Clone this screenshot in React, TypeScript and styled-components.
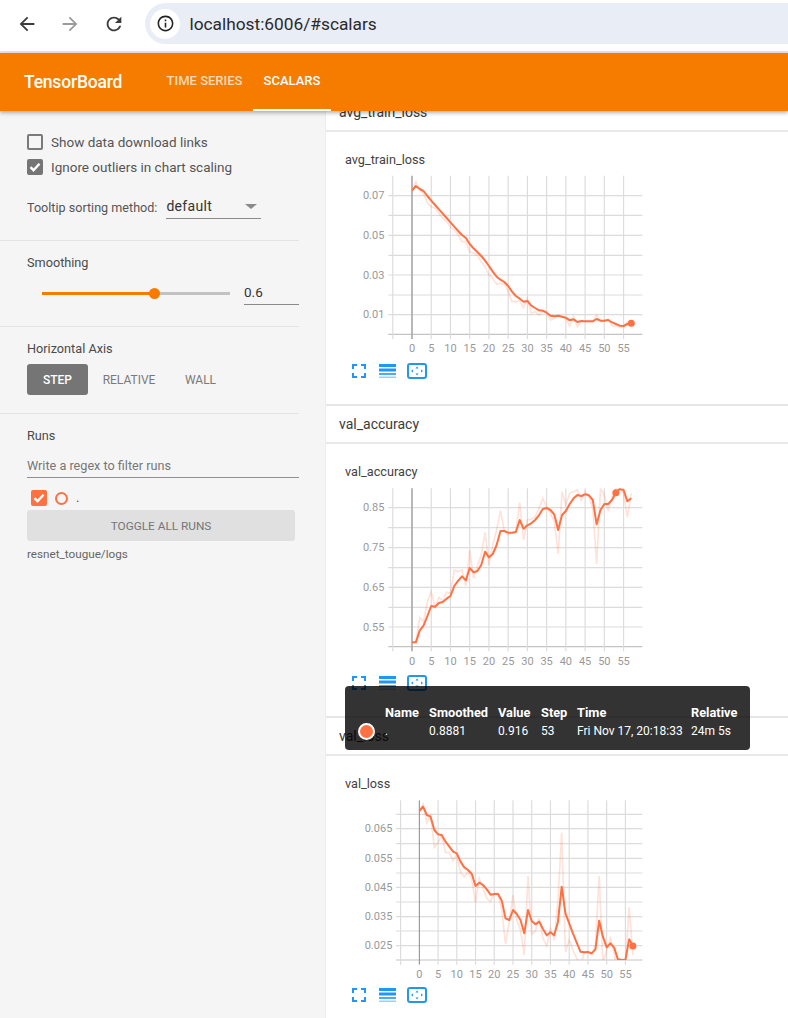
import { FC } from 'react'
import styled, { createGlobalStyle } from 'styled-components'

const GlobalStyle = createGlobalStyle`
	html, body {
		margin: 0;
		padding: 0;
		background: #fff;
		font-family: Roboto, "Liberation Sans", sans-serif;
		color: #424242;
	}
	* {
		box-sizing: border-box;
	}
`

const Page = styled.div`
	position: relative;
	width: 788px;
	height: 1018px;
	overflow: hidden;
	display: flex;
	flex-direction: column;
`

const BrowserBar = styled.div`
	height: 53px;
	flex: none;
	display: flex;
	align-items: flex-start;
	padding: 3px 0 0 16px;
	background: #fff;
	border-bottom: 2px solid #e4e4e4;
`

const NavIcon = styled.svg<{ $muted?: boolean; $gap: number }>`
	width: 22px;
	height: 22px;
	flex: none;
	margin: 10px ${p => p.$gap}px 0 0;
	fill: ${p => (p.$muted ? '#9a9a9a' : '#3c3c3c')};
`

const UrlPill = styled.div`
	flex: 1;
	height: 41px;
	display: flex;
	align-items: center;
	gap: 9.5px;
	padding-left: 5px;
	border-radius: 21px 0 0 21px;
	background: #e9edf6;
	font-size: 17.3px;
	color: #2a2a2a;
`

const InfoBadge = styled.div`
	width: 30px;
	height: 30px;
	border-radius: 50%;
	background: #fff;
	display: flex;
	align-items: center;
	justify-content: center;

	svg {
		width: 19px;
		height: 19px;
		fill: #222;
	}
`

const Header = styled.div`
	position: relative;
	z-index: 2;
	height: 58px;
	flex: none;
	display: flex;
	align-items: stretch;
	padding-left: 24px;
	background: #f67c00;
	box-shadow: 0 2px 4px rgba(0, 0, 0, 0.3);
	color: #fff;
`

const Brand = styled.div`
	width: 132px;
	font-size: 17.5px;
	font-weight: 500;
	letter-spacing: -0.2px;
	line-height: 58px;
`

const Tab = styled.div<{ $active?: boolean; $width: number }>`
	width: ${p => p.$width}px;
	text-align: center;
	line-height: 56px;
	font-size: 13px;
	font-weight: 500;
	white-space: nowrap;
	color: ${p => (p.$active ? '#fff' : 'rgba(255, 255, 255, 0.72)')};
	border-bottom: 2px solid ${p => (p.$active ? '#fff' : 'transparent')};
`

const Main = styled.div`
	flex: 1;
	display: flex;
	min-height: 0;
`

const Sidebar = styled.div`
	width: 326px;
	flex: none;
	background: #f5f5f5;
	border-right: 1px solid #ececec;
	color: #555;
`

const Group = styled.div<{ $top: number; $bottom: number; $last?: boolean }>`
	margin: 0 26px 0 27px;
	padding: ${p => p.$top}px 0 ${p => p.$bottom}px;
	position: relative;

	${p => !p.$last && `
		&::after {
			content: '';
			position: absolute;
			left: -27px;
			right: 0;
			bottom: 0;
			height: 1px;
			background: #e3e3e3;
		}
	`}
`

const CheckRow = styled.div`
	height: 25px;
	display: flex;
	align-items: center;
	gap: 8px;
	font-size: 13.5px;
`

const Box = styled.div<{ $color?: string }>`
	width: 16px;
	height: 16px;
	flex: none;
	border-radius: 2px;
	border: 2px solid ${p => p.$color ?? '#7a7a7a'};
	background: ${p => p.$color ?? 'transparent'};
	display: flex;
	align-items: center;
	justify-content: center;

	svg {
		width: 12px;
		height: 12px;
		fill: none;
		stroke: #fff;
		stroke-width: 2.4;
	}
`

const SortRow = styled.div`
	height: 24px;
	margin-top: 16px;
	display: flex;
	align-items: center;
	gap: 9px;
	font-size: 12.6px;
	white-space: nowrap;
`

const Select = styled.div`
	width: 95px;
	height: 24px;
	display: flex;
	align-items: center;
	justify-content: space-between;
	padding: 0 4px 1px 0;
	border-bottom: 1px solid #8a8a8a;
	font-size: 14px;
	letter-spacing: 0.3px;
	color: #333;

	&::after {
		content: '';
		border-left: 6px solid transparent;
		border-right: 6px solid transparent;
		border-top: 5px solid #8a8a8a;
	}
`

const Label = styled.div`
	height: 18px;
	line-height: 18px;
	font-size: 12.7px;
	color: #4a4a4a;
`

const SliderRow = styled.div`
	height: 24px;
	margin-top: 9px;
	padding-left: 15px;
	display: flex;
	align-items: center;
	gap: 14px;
`

const Track = styled.div<{ $percent: number }>`
	position: relative;
	width: 188px;
	height: 3px;
	background: linear-gradient(
		to right,
		#f57c00 ${p => p.$percent}%,
		#c2c2c2 ${p => p.$percent}%
	);

	&::after {
		content: '';
		position: absolute;
		left: ${p => p.$percent}%;
		top: 50%;
		width: 11px;
		height: 11px;
		margin: -5.5px 0 0 -5.5px;
		border-radius: 50%;
		background: #f57c00;
	}
`

const ValueField = styled.div`
	flex: 1;
	height: 24px;
	line-height: 22px;
	border-bottom: 1px solid #8a8a8a;
	font-size: 13.5px;
	color: #333;
`

const AxisButtons = styled.div`
	height: 31px;
	margin-top: 6px;
	display: flex;
	align-items: stretch;
	font-size: 12px;
`

const AxisButton = styled.div<{ $active?: boolean; $width: number }>`
	width: ${p => p.$width}px;
	display: flex;
	align-items: center;
	justify-content: center;
	border-radius: 3px;
	font-weight: ${p => (p.$active ? 500 : 400)};
	background: ${p => (p.$active ? '#757575' : 'transparent')};
	color: ${p => (p.$active ? '#fff' : '#7a7a7a')};
`

const Filter = styled.div`
	height: 24px;
	margin-top: 9px;
	line-height: 23px;
	border-bottom: 1px solid #8f8f8f;
	font-size: 12.65px;
	color: #777;
`

const RunRow = styled.div`
	height: 16px;
	margin: 12px 0 0 4px;
	display: flex;
	align-items: center;
	gap: 8px;
	font-size: 13px;
	line-height: 16px;
`

const RunDot = styled.div`
	width: 13px;
	height: 13px;
	border-radius: 50%;
	border: 2px solid #ff7043;
`

const ToggleButton = styled.div`
	width: 268px;
	height: 31px;
	margin-top: 4px;
	display: flex;
	align-items: center;
	justify-content: center;
	border-radius: 3px;
	background: #e0e0e0;
	font-size: 11.8px;
	color: #757575;
`

const RepoName = styled.div`
	margin-top: 5px;
	line-height: 16px;
	font-size: 11.7px;
	color: #666;
`

const Content = styled.div`
	flex: 1;
	min-width: 0;
	margin-top: -19px;
`

const SectionHead = styled.div`
	height: 40px;
	padding-left: 13px;
	line-height: 36px;
	font-size: 14px;
	color: #3a3a3a;
	border-top: 2px solid #e6e6e6;
	border-bottom: 2px solid #e9e9e9;
`

const Card = styled.div`
	height: 272px;
	padding-left: 14px;
`

const CardTitle = styled.div`
	height: 38px;
	padding: 20px 0 0 5px;
	line-height: 16px;
	font-size: 12.7px;
	color: #424242;
`

const ChartSvg = styled.svg`
	display: block;
	width: 310px;
	height: 190px;
	font-family: Roboto, "Liberation Sans", sans-serif;
`

const ChartTools = styled.div`
	height: 16px;
	margin: 3px 0 0 12px;
	display: flex;
	align-items: center;
	color: #2196f3;

	svg {
		display: block;
		flex: none;
	}
`

const Tooltip = styled.div`
	position: absolute;
	z-index: 3;
	left: 345px;
	top: 686px;
	width: 405px;
	height: 64px;
	padding: 18px 0 0 40px;
	border-radius: 4px;
	background: rgba(0, 0, 0, 0.8);
	color: #fff;
	font-size: 12px;
	display: grid;
	grid-template-columns: 44px 69px 43px 36px 114px auto;
	grid-template-rows: 17px 20px;
	align-items: center;
	white-space: nowrap;
`

const TipHead = styled.div`
	font-weight: 700;
	font-size: 12.8px;
`

const TipDot = styled.div`
	position: absolute;
	left: 13px;
	top: 37px;
	width: 17px;
	height: 17px;
	border-radius: 50%;
	background: #ff7043;
	border: 2px solid #fff;
`

type ChartSpec = {
	viewY: number
	x0: number
	left: number
	hLeft: number
	top: number
	bottom: number
	lines: number[]
	labels: [number, string][]
	labelEnd: number
	axisWidth: number
	axisColor: string
	smoothed: number[]
	raw: number[]
	marker: number
	stepSize: number
}

const RIGHT = 907

const lossChart: ChartSpec = {
	viewY: 0,
	x0: 216,
	left: 158,
	hLeft: 145,
	top: 17,
	bottom: 493,
	lines: [77, 136, 196, 256, 315, 375, 434],
	labels: [[77, '0.07'], [196, '0.05'], [315, '0.03'], [434, '0.01']],
	labelEnd: 133,
	axisWidth: 5,
	axisColor: '#aaa',
	stepSize: 11.54,
	marker: 57,
	smoothed: [62, 48, 57, 63, 78, 92, 105, 118, 131, 144, 157, 170, 183, 195, 204, 222, 235, 246, 258, 272, 288, 305, 320, 329, 336, 348, 365, 378, 386, 395, 393, 407, 414, 421, 422, 428, 437, 439, 437, 440, 443, 451, 448, 456, 453, 454, 454, 454, 447, 452, 452, 450, 457, 462, 467, 468, 462, 460],
	raw: [60, 35, 60, 70, 100, 110, 115, 130, 145, 155, 170, 180, 195, 215, 215, 245, 250, 255, 275, 290, 315, 325, 343, 340, 342, 365, 395, 395, 393, 412, 385, 430, 425, 435, 425, 430, 450, 445, 435, 440, 445, 468, 440, 470, 452, 455, 455, 455, 435, 455, 452, 448, 468, 468, 472, 470, 455, 458],
}

const accuracyChart: ChartSpec = {
	viewY: 6,
	x0: 216,
	left: 158,
	hLeft: 145,
	top: 25,
	bottom: 500,
	lines: [83, 143, 203, 263, 322, 382, 441],
	labels: [[83, '0.85'], [203, '0.75'], [322, '0.65'], [441, '0.55']],
	labelEnd: 133,
	axisWidth: 5,
	axisColor: '#aaa',
	stepSize: 11.54,
	marker: 53,
	smoothed: [487, 487, 452, 437, 408, 378, 380, 369, 366, 356, 348, 318, 302, 289, 301, 264, 277, 273, 255, 215, 232, 222, 195, 153, 153, 158, 158, 156, 120, 146, 136, 130, 120, 106, 87, 84, 90, 104, 150, 105, 93, 72, 55, 45, 48, 43, 46, 60, 133, 90, 72, 72, 60, 38, 27, 30, 64, 55],
	raw: [487, 487, 413, 425, 365, 335, 382, 352, 362, 337, 340, 270, 275, 270, 318, 210, 295, 258, 225, 157, 255, 195, 150, 92, 153, 165, 158, 155, 68, 180, 120, 118, 110, 85, 55, 80, 100, 125, 222, 35, 75, 40, 35, 30, 60, 35, 50, 85, 252, 25, 45, 90, 50, 25, 25, 40, 112, 40],
}

const valLossChart: ChartSpec = {
	viewY: 12,
	x0: 238,
	left: 182,
	hLeft: 168,
	top: 31,
	bottom: 510,
	lines: [73, 116, 161, 205, 249, 292, 336, 380, 423, 467],
	labels: [[116, '0.065'], [205, '0.055'], [292, '0.045'], [380, '0.035'], [467, '0.025']],
	labelEnd: 157,
	axisWidth: 3,
	axisColor: '#888',
	stepSize: 11.24,
	marker: 57,
	smoothed: [63, 50, 75, 80, 120, 133, 136, 155, 170, 185, 190, 215, 232, 240, 252, 288, 278, 285, 298, 314, 312, 312, 332, 385, 390, 360, 372, 390, 430, 360, 393, 403, 395, 417, 436, 427, 436, 395, 290, 370, 400, 430, 458, 485, 487, 486, 490, 478, 392, 440, 472, 460, 473, 508, 510, 510, 448, 468],
	raw: [60, 42, 98, 75, 172, 158, 135, 188, 188, 212, 195, 248, 260, 245, 270, 338, 265, 295, 325, 335, 310, 310, 360, 462, 395, 315, 390, 420, 495, 258, 432, 422, 385, 445, 468, 415, 450, 330, 128, 485, 450, 480, 505, 530, 488, 485, 495, 465, 258, 520, 480, 445, 490, 560, 515, 520, 352, 495],
}

const XTICKS = [0, 5, 10, 15, 20, 25, 30, 35, 40, 45, 50, 55]
const ORANGE = '#ff7043'
const GRID = '#dcdcdc'

const Chart: FC<{ spec: ChartSpec; id: string }> = ({ spec, id }) => {
	const xOf = (step: number) => spec.x0 + step * spec.stepSize
	const toPoints = (values: number[]) => values.map((y, i) => `${xOf(i).toFixed(1)},${y}`).join(' ')
	const markerY = spec.smoothed[spec.marker]

	return (
		<ChartSvg viewBox={`0 ${spec.viewY} 930 570`}>
			<defs>
				<clipPath id={id}>
					<rect x={spec.left} y={spec.top} width={RIGHT - spec.left} height={spec.bottom - spec.top} />
				</clipPath>
			</defs>
			{spec.lines.map(y => (
				<line key={y} x1={spec.hLeft} x2={RIGHT} y1={y} y2={y} stroke={GRID} strokeWidth={3.5} />
			))}
			<line x1={spec.hLeft} x2={RIGHT} y1={spec.bottom} y2={spec.bottom} stroke="#c4c4c4" strokeWidth={3.5} />
			{[-5, ...XTICKS].map(t => (
				<line
					key={t}
					x1={xOf(t)}
					x2={xOf(t)}
					y1={spec.top}
					y2={spec.bottom + 14}
					stroke={t === 0 ? spec.axisColor : GRID}
					strokeWidth={t === 0 ? spec.axisWidth : 3.5}
				/>
			))}
			{spec.labels.map(([y, text]) => (
				<text key={text} x={spec.labelEnd} y={y + 11} textAnchor="end" fontSize={33} fill="#999">{text}</text>
			))}
			{XTICKS.map(t => (
				<text key={t} x={xOf(t)} y={spec.bottom + 54} textAnchor="middle" fontSize={33} fill="#999">{t}</text>
			))}
			<g clipPath={`url(#${id})`}>
				<polyline points={toPoints(spec.raw)} fill="none" stroke={ORANGE} strokeOpacity={0.2} strokeWidth={5} />
				<polyline points={toPoints(spec.smoothed)} fill="none" stroke={ORANGE} strokeWidth={6} strokeLinejoin="round" />
			</g>
			<circle cx={xOf(spec.marker)} cy={markerY} r={10.5} fill={ORANGE} />
		</ChartSvg>
	)
}

const Tools: FC = () => (
	<ChartTools>
		<svg width="14" height="14" viewBox="0 0 14 14" fill="none" stroke="currentColor" strokeWidth="2">
			<path d="M1 5V1h4M9 1h4v4M13 9v4H9M5 13H1V9" />
		</svg>
		<svg width="17" height="14" viewBox="0 0 17 14" fill="currentColor" style={{ marginLeft: 13 }}>
			<rect y="0" width="17" height="3" />
			<rect y="4.5" width="17" height="3" />
			<rect y="9" width="17" height="2" opacity="0.8" />
			<rect y="12.5" width="17" height="1.5" opacity="0.45" />
		</svg>
		<svg width="20" height="16" viewBox="0 0 20 16" fill="none" style={{ marginLeft: 11 }}>
			<rect x="1" y="1" width="18" height="14" rx="2" stroke="currentColor" strokeWidth="2" />
			<path d="M10 3.5l1.5 2h-3zM10 12.5l1.5-2h-3zM4 8l2-1.5v3zM16 8l-2-1.5v3z" fill="currentColor" />
		</svg>
	</ChartTools>
)

const Section: FC<{ title: string; spec: ChartSpec; id: string }> = ({ title, spec, id }) => (
	<>
		<SectionHead>{title}</SectionHead>
		<Card>
			<CardTitle>{title}</CardTitle>
			<Chart spec={spec} id={id} />
			<Tools />
		</Card>
	</>
)

const Check: FC = () => (
	<svg viewBox="0 0 12 12"><path d="M1.5 6.2l3 3 6-6.4" /></svg>
)

export default function App() {
	return (
		<Page>
			<GlobalStyle />
			<BrowserBar>
				<NavIcon viewBox="0 0 24 24" $gap={20.5}>
					<path d="M20 11H7.83l5.59-5.59L12 4l-8 8 8 8 1.41-1.41L7.83 13H20v-2z" />
				</NavIcon>
				<NavIcon viewBox="0 0 24 24" $gap={22} $muted>
					<path d="M4 11h12.17l-5.59-5.59L12 4l8 8-8 8-1.41-1.41L16.17 13H4v-2z" />
				</NavIcon>
				<NavIcon viewBox="0 0 24 24" $gap={20.5}>
					<path d="M17.65 6.35C16.2 4.9 14.21 4 12 4c-4.42 0-7.99 3.58-7.99 8s3.57 8 7.99 8c3.73 0 6.84-2.55 7.73-6h-2.08c-.82 2.33-3.04 4-5.65 4-3.31 0-6-2.69-6-6s2.69-6 6-6c1.66 0 3.14.69 4.22 1.78L13 11h7V4l-2.35 2.35z" />
				</NavIcon>
				<UrlPill>
					<InfoBadge>
						<svg viewBox="0 0 24 24">
							<path d="M11 7h2v2h-2zm0 4h2v6h-2zm1-9C6.48 2 2 6.48 2 12s4.48 10 10 10 10-4.48 10-10S17.52 2 12 2zm0 18c-4.41 0-8-3.59-8-8s3.59-8 8-8 8 3.59 8 8-3.59 8-8 8z" />
						</svg>
					</InfoBadge>
					localhost:6006/#scalars
				</UrlPill>
			</BrowserBar>
			<Header>
				<Brand>TensorBoard</Brand>
				<Tab $width={97}>TIME SERIES</Tab>
				<Tab $active $width={78}>SCALARS</Tab>
			</Header>
			<Main>
				<Sidebar>
					<Group $top={18} $bottom={22}>
						<CheckRow><Box />Show data download links</CheckRow>
						<CheckRow><Box $color="#757575"><Check /></Box>Ignore outliers in chart scaling</CheckRow>
						<SortRow>
							Tooltip sorting method:
							<Select>default</Select>
						</SortRow>
					</Group>
					<Group $top={13} $bottom={22}>
						<Label>Smoothing</Label>
						<SliderRow>
							<Track $percent={60} />
							<ValueField>0.6</ValueField>
						</SliderRow>
					</Group>
					<Group $top={13} $bottom={19}>
						<Label>Horizontal Axis</Label>
						<AxisButtons>
							<AxisButton $active $width={61}>STEP</AxisButton>
							<AxisButton $width={82}>RELATIVE</AxisButton>
							<AxisButton $width={61}>WALL</AxisButton>
						</AxisButtons>
					</Group>
					<Group $top={13} $bottom={0} $last>
						<Label>Runs</Label>
						<Filter>Write a regex to filter runs</Filter>
						<RunRow>
							<Box $color={ORANGE}><Check /></Box>
							<RunDot />
							<span>.</span>
						</RunRow>
						<ToggleButton>TOGGLE ALL RUNS</ToggleButton>
						<RepoName>resnet_tougue/logs</RepoName>
					</Group>
				</Sidebar>
				<Content>
					<Section title="avg_train_loss" spec={lossChart} id="clip-loss" />
					<Section title="val_accuracy" spec={accuracyChart} id="clip-acc" />
					<Section title="val_loss" spec={valLossChart} id="clip-val" />
				</Content>
			</Main>
			<Tooltip>
				<TipDot />
				<TipHead>Name</TipHead>
				<TipHead>Smoothed</TipHead>
				<TipHead>Value</TipHead>
				<TipHead>Step</TipHead>
				<TipHead>Time</TipHead>
				<TipHead>Relative</TipHead>
				<div>.</div>
				<div>0.8881</div>
				<div>0.916</div>
				<div>53</div>
				<div>Fri Nov 17, 20:18:33</div>
				<div>24m 5s</div>
			</Tooltip>
		</Page>
	)
}
